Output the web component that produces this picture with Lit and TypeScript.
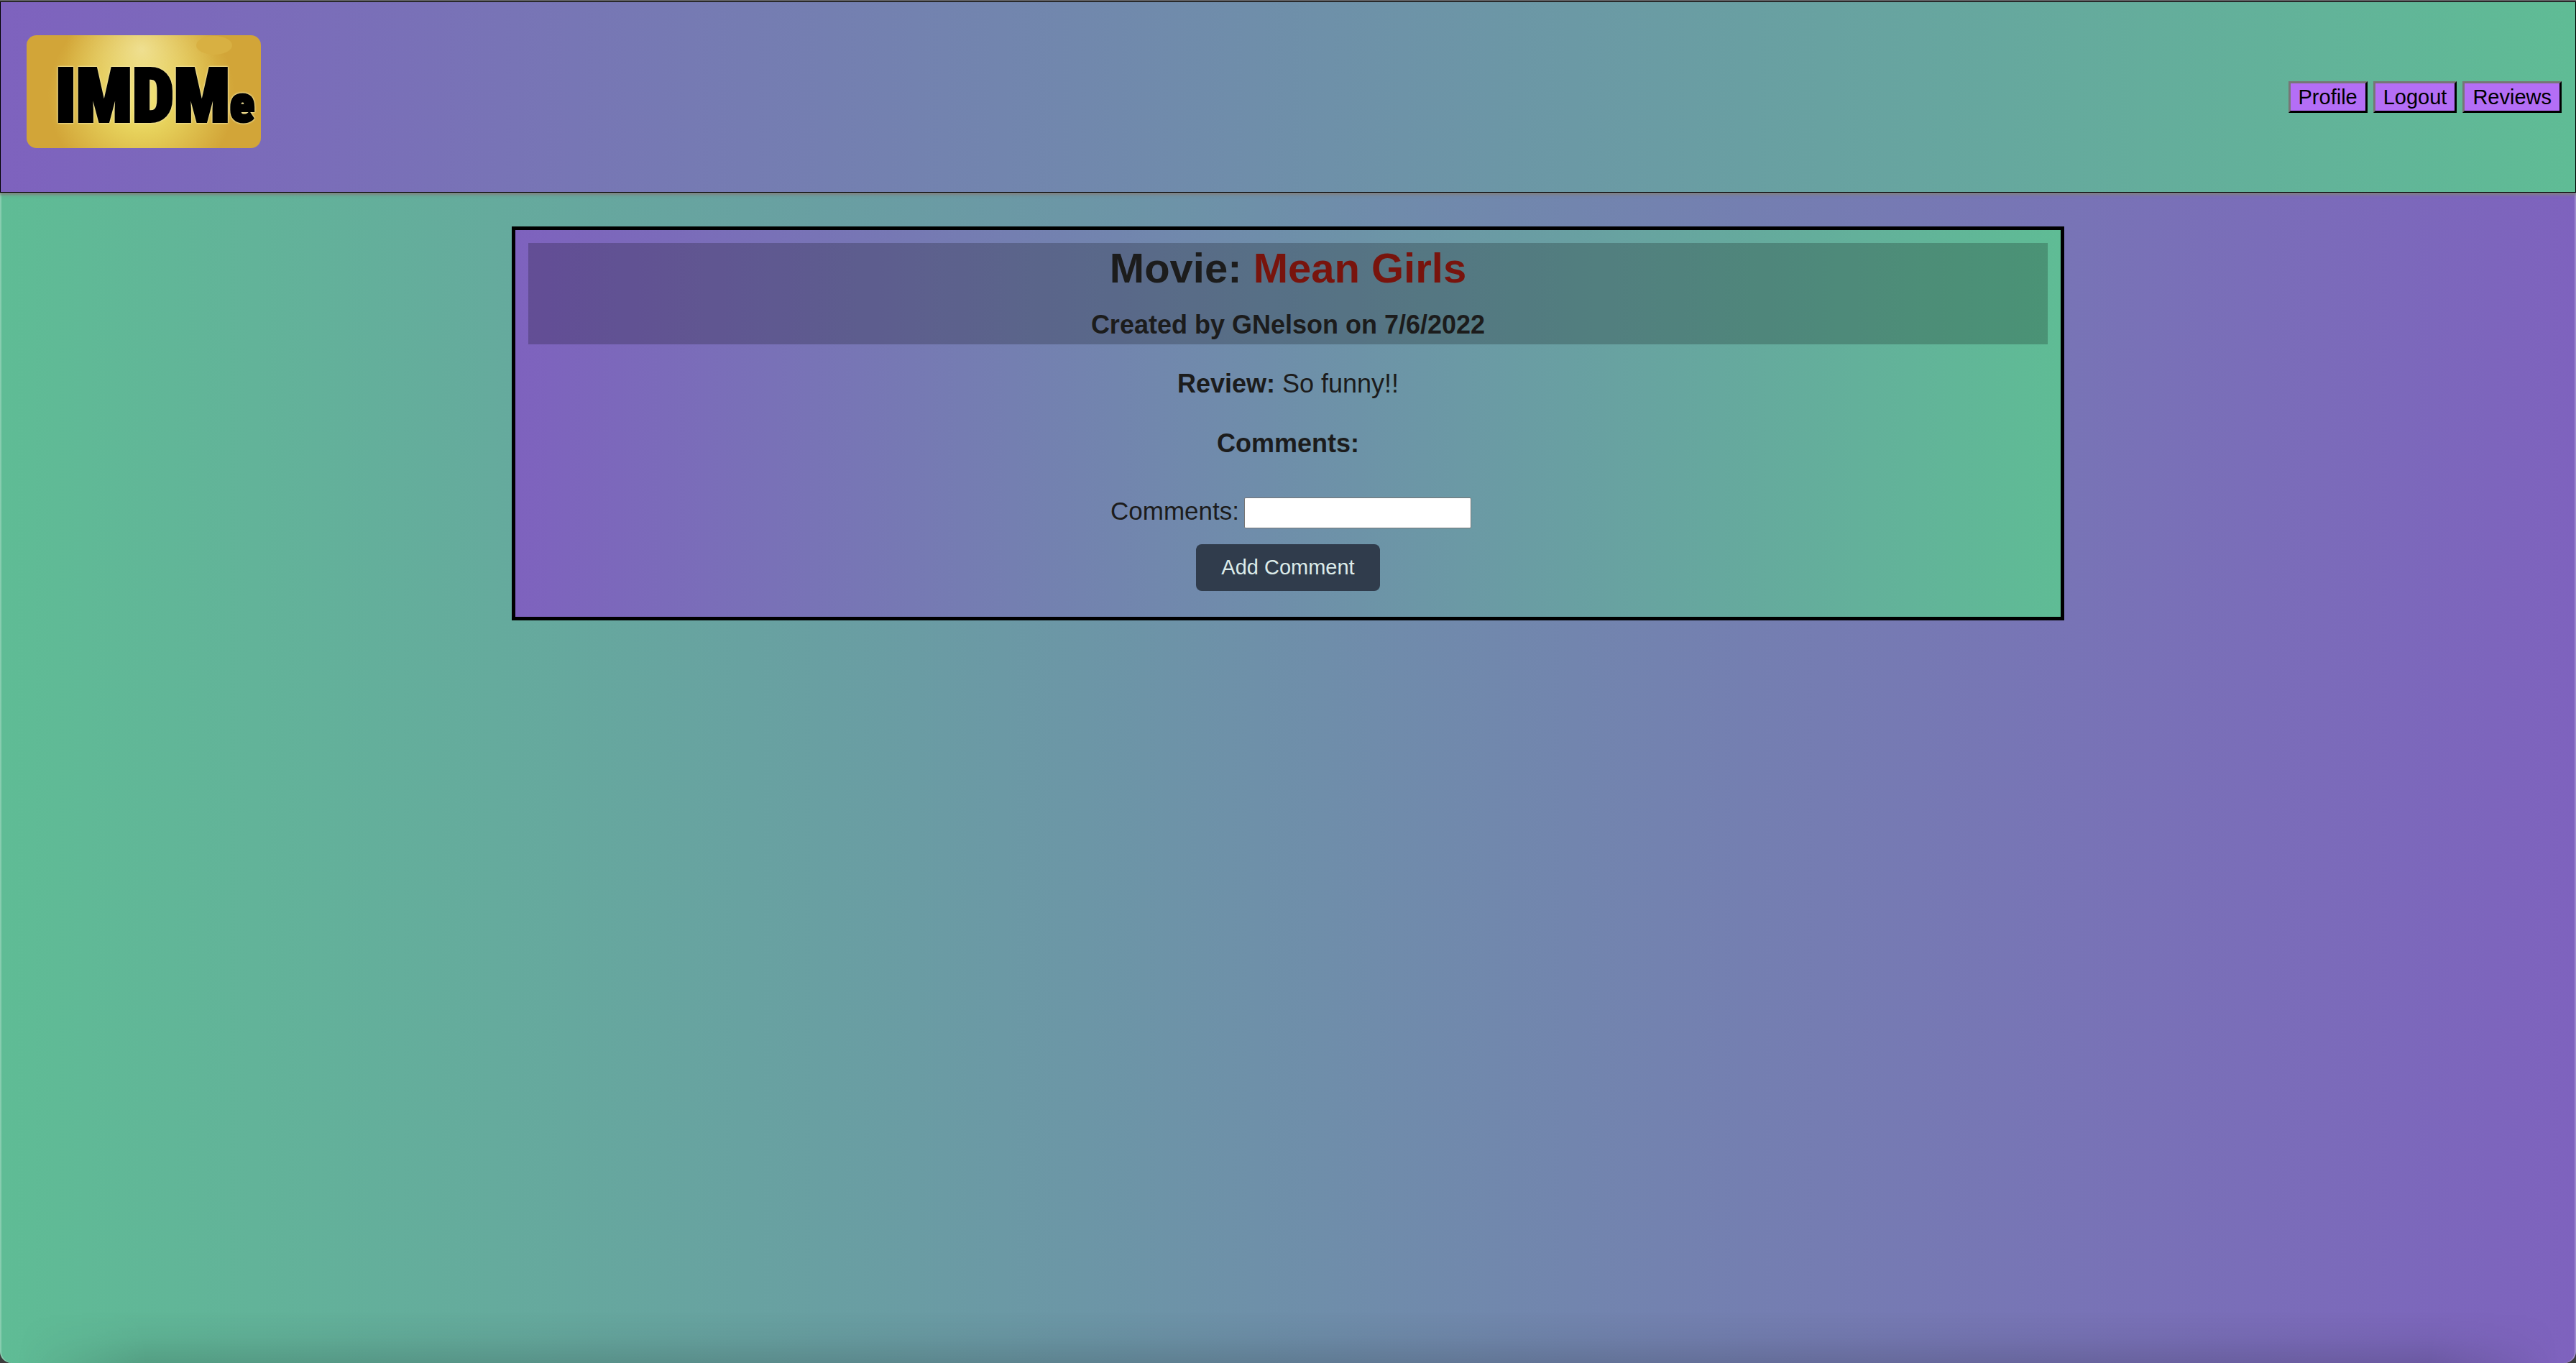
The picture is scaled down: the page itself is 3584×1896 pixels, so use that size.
import { LitElement, html, css } from "lit";
import { customElement, state } from "lit/decorators.js";

@customElement("site-logo")
export class SiteLogo extends LitElement {
  static styles = css`
    :host {
      display: block;
      line-height: 0;
    }
    .logo {
      display: block;
      width: 326px;
      height: 157px;
    }
    .mark {
      font-family: Impact, "Roboto Condensed", "Open Sans Condensed", Roboto, sans-serif;
      font-size: 103px;
      font-weight: 900;
      fill: #000;
      stroke: #000;
      stroke-width: 4px;
      filter: drop-shadow(0 0 1px #f4e8a4) drop-shadow(0 0 1px #f0e096);
    }
    .small {
      font-size: 70px;
    }
  `;

  render() {
    return html`
      <svg class="logo" viewBox="0 0 326 157" role="img" aria-label="IMDMe">
        <defs>
          <radialGradient id="glow" gradientUnits="userSpaceOnUse" cx="160" cy="85" r="130">
            <stop offset="0" stop-color="#f8ec78" />
            <stop offset="0.4" stop-color="#e6d05a" />
            <stop offset="1" stop-color="#d2a538" />
          </radialGradient>
          <radialGradient id="shine" gradientUnits="userSpaceOnUse" cx="160" cy="20" r="105">
            <stop offset="0" stop-color="#f2e5a0" stop-opacity="0.8" />
            <stop offset="1" stop-color="#e8d070" stop-opacity="0" />
          </radialGradient>
        </defs>
        <rect width="326" height="157" rx="14" fill="url(#glow)" />
        <rect width="326" height="157" rx="14" fill="url(#shine)" />
        <ellipse cx="261" cy="14" rx="25" ry="13" fill="#d8b042" />
        <text class="mark" x="40" y="120">IMDM<tspan class="small">e</tspan></text>
      </svg>
    `;
  }
}

@customElement("app-root")
export class AppRoot extends LitElement {
  static styles = css`
    :host {
      display: block;
      background: #3c3c3c;
      color: #1c1c1c;
      font-family: "Liberation Sans", Arial, sans-serif;
      font-size: 36px;
      line-height: 56px;
    }
    .page {
      display: flex;
      flex-direction: column;
      box-sizing: border-box;
      min-height: 100vh;
      border-top: 2px solid #5c5c5f;
      border-radius: 0 0 16px 16px;
      background: linear-gradient(to right, #5fbc95, #7e62be);
      box-shadow: inset 2px 0 rgba(255, 255, 255, 0.25), inset -2px 0 rgba(255, 255, 255, 0.25);
    }
    .top {
      display: flex;
      justify-content: space-between;
      align-items: center;
      box-sizing: border-box;
      min-height: 266px;
      padding: 0 19px 0 36px;
      border: 1px solid #000;
      background: linear-gradient(to right, #7e62be, #5fbc95);
      box-shadow: 0 2px 4px 1px #7f7f7f;
    }
    .brand {
      padding-bottom: 16px;
    }
    .nav {
      display: flex;
      gap: 8px;
    }
    .nav-button {
      height: 44px;
      padding: 0 11px;
      border: 3px outset #000;
      border-color: #767676 #222 #222 #767676;
      background: #b46ef6;
      color: #000;
      font: 29px/36px "Liberation Sans", Arial, sans-serif;
    }
    .review {
      width: 59%;
      margin: 47px auto 0;
      padding: 18px;
      border: 5px solid #000;
      background: linear-gradient(to right, #7e62be, #5fbc95);
      text-align: center;
    }
    .heading {
      display: grid;
      gap: 16px;
      background: rgba(0, 0, 0, 0.21);
    }
    .title {
      margin: 0;
      font-size: 58px;
      line-height: 70px;
    }
    .movie {
      color: #78140d;
    }
    .byline {
      margin: 0;
      font-size: 36px;
      line-height: 55px;
    }
    .line {
      margin: 27px 0 0;
      font-size: 36px;
    }
    .form {
      display: flex;
      flex-direction: column;
      align-items: center;
      gap: 18px;
      margin: 38px 0 18px;
    }
    .field {
      display: flex;
      align-items: baseline;
      gap: 7px;
      padding-left: 8px;
      font-size: 35px;
    }
    .input {
      box-sizing: border-box;
      width: 316px;
      height: 43px;
      padding: 2px 4px;
      border: 1px solid #767676;
      border-radius: 2px;
      background: #fff;
      font: 29px "Liberation Sans", Arial, sans-serif;
    }
    .submit {
      height: 65px;
      padding: 0 35px;
      border: 0;
      border-radius: 8px;
      background: #303c4c;
      color: #dcebe9;
      font: 29px "Liberation Sans", Arial, sans-serif;
    }
    .shade {
      height: 72px;
      margin: auto 24px 0;
      background: linear-gradient(to top, rgba(0, 0, 0, 0.13), rgba(0, 0, 0, 0.04) 50%, transparent);
      mask-image: linear-gradient(to right, transparent, #000 180px, #000 calc(100% - 180px), transparent);
    }
  `;

  @state() private comment = "";

  private onInput(e: Event) {
    this.comment = (e.target as HTMLInputElement).value;
  }

  render() {
    return html`
      <div class="page">
        <header class="top">
          <site-logo class="brand"></site-logo>
          <nav class="nav">
            ${["Profile", "Logout", "Reviews"].map(
              (name) => html`<button class="nav-button" type="button">${name}</button>`
            )}
          </nav>
        </header>
        <main class="review">
          <div class="heading">
            <h1 class="title">Movie: <span class="movie">Mean Girls</span></h1>
            <h2 class="byline">Created by GNelson on 7/6/2022</h2>
          </div>
          <p class="line"><strong>Review:</strong> So funny!!</p>
          <h3 class="line">Comments:</h3>
          <form class="form" @submit=${(e: Event) => e.preventDefault()}>
            <div class="field">
              <label for="comment">Comments:</label>
              <input class="input" id="comment" type="text" .value=${this.comment} @input=${this.onInput} />
            </div>
            <button class="submit" type="submit">Add Comment</button>
          </form>
        </main>
        <div class="shade"></div>
      </div>
    `;
  }
}
